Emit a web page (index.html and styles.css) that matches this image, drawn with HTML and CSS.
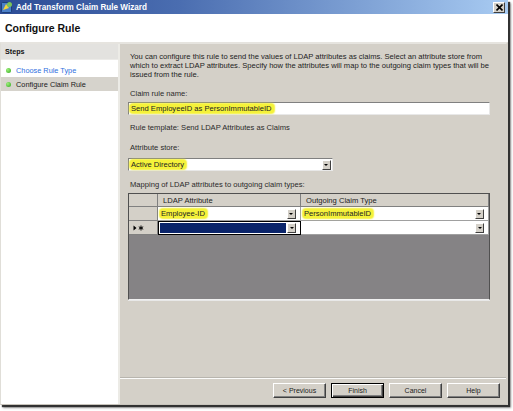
FILE: index.html
```html
<!DOCTYPE html>
<html>
<head>
<meta charset="utf-8">
<link rel="stylesheet" href="styles.css">
</head>
<body>
<div class="window">
  <div class="titlebar">
    <svg class="app-icon" width="12" height="12" viewBox="0 0 12 12">
      <rect x="0.5" y="1.5" width="10" height="10" rx="1" fill="#4a7fc8" stroke="#1d3f7a" stroke-width="1"/>
      <path d="M2 9 L5 3 L8 7 Z" fill="#f4d43c"/>
      <circle cx="8.5" cy="3.5" r="2.5" fill="#7cc25a"/>
    </svg>
    <span class="title">Add Transform Claim Rule Wizard</span>
    <span class="close">
      <svg width="7" height="7" viewBox="0 0 7 7"><path d="M0.5 0.5 L6.5 6.5 M6.5 0.5 L0.5 6.5" stroke="#000" stroke-width="1.6"/></svg>
    </span>
  </div>
  <div class="header"><h1 class="page-title">Configure Rule</h1></div>
  <div class="body">
    <div class="sidebar">
      <div class="steps-head">Steps</div>
      <div class="step done"><span class="dot"></span>Choose Rule Type</div>
      <div class="step current"><span class="dot"></span>Configure Claim Rule</div>
    </div>
    <div class="main">
      <div class="content">
        <p class="desc">You can configure this rule to send the values of LDAP attributes as claims. Select an attribute store from which to extract LDAP attributes. Specify how the attributes will map to the outgoing claim types that will be issued from the rule.</p>
        <div class="label l-name">Claim rule name:</div>
        <div class="textbox"><span class="hl">Send EmployeeID as PersonImmutableID</span></div>
        <div class="label l-template">Rule template: Send LDAP Attributes as Claims</div>
        <div class="label l-store">Attribute store:</div>
        <div class="combo"><span class="hl">Active Directory</span><span class="dd"><span class="arrow"></span></span></div>
        <div class="label l-map">Mapping of LDAP attributes to outgoing claim types:</div>
        <div class="grid">
          <div class="grow ghead">
            <div class="rh"></div>
            <div class="c1 hcell">LDAP Attribute</div>
            <div class="c2 hcell">Outgoing Claim Type</div>
          </div>
          <div class="grow">
            <div class="rh"></div>
            <div class="c1 cell"><span class="hl">Employee-ID</span><span class="dd"><span class="arrow"></span></span></div>
            <div class="c2 cell"><span class="hl">PersonImmutableID</span><span class="dd"><span class="arrow"></span></span></div>
          </div>
          <div class="grow">
            <div class="rh">
              <svg width="11" height="6" viewBox="0 0 11 6"><path d="M0.5 0.5 L3.5 3 L0.5 5.5 Z" fill="#000"/><path d="M8 0.5 V5.5 M5.8 1.8 L10.2 4.2 M10.2 1.8 L5.8 4.2" stroke="#000" stroke-width="1"/></svg>
            </div>
            <div class="c1 cell sel"><span class="selfill"></span><span class="dd"><span class="arrow"></span></span></div>
            <div class="c2 cell"><span class="dd"><span class="arrow"></span></span></div>
          </div>
          <div class="gempty"></div>
        </div>
      </div>
      <div class="footer">
        <button class="btn">&lt; Previous</button>
        <button class="btn default">Finish</button>
        <button class="btn">Cancel</button>
        <button class="btn">Help</button>
      </div>
    </div>
  </div>
</div>
</body>
</html>
```

FILE: styles.css
```css
html, body {
  margin: 0;
  padding: 0;
  background: #ffffff;
}
body {
  width: 513px;
  height: 411px;
  font-family: "Liberation Sans", Arial, sans-serif;
  font-size: 7.6px;
  color: #1a1a1a;
  overflow: hidden;
}
.window {
  width: 508px;
  height: 405px;
  display: flex;
  flex-direction: column;
  background: #d4d0c8;
  box-shadow: 2px 2px 1px rgba(30, 30, 30, 0.85), 3px 3px 2px rgba(60, 60, 60, 0.5);
}
.titlebar {
  height: 14px;
  display: flex;
  align-items: center;
  background: linear-gradient(to right, #2c4c96 0%, #4a6db0 35%, #a8cbf2 100%);
  padding: 0 2px 0 1px;
}
.app-icon {
  flex: none;
  margin-right: 3px;
}
.title {
  color: #fff;
  font-weight: bold;
  font-size: 8.15px;
  flex: 1;
}
.close {
  width: 10px;
  height: 9px;
  display: flex;
  align-items: center;
  justify-content: center;
  background: #d4d0c8;
  border-top: 1px solid #fff;
  border-left: 1px solid #fff;
  border-right: 1px solid #404040;
  border-bottom: 1px solid #404040;
  margin-right: 1px;
}
.header {
  height: 28px;
  background: #fff;
  display: flex;
  align-items: center;
  padding-left: 5px;
}
.page-title {
  margin: 0;
  font-size: 10.5px;
  font-weight: bold;
  color: #111;
}
.body {
  flex: 1;
  display: flex;
  border-top: 2px solid #e6e4df;
  border-left: 1px solid #e0ded8;
  border-right: 2px solid #d4d0c8;
  border-bottom: 1px solid #c8c4bc;
}
.sidebar {
  width: 117px;
  background: #fff;
  border-right: 2px solid #ecebe6;
}
.steps-head {
  height: 15px;
  line-height: 15px;
  background: #e3e2df;
  font-weight: bold;
  padding-left: 4px;
  font-size: 7.2px;
  color: #111;
  border-bottom: 1px solid #ecebe8;
}
.step {
  height: 14px;
  display: flex;
  align-items: center;
  padding-left: 5px;
  font-size: 7.35px;
}
.step.done {
  margin-top: 3px;
  color: #2f6fe0;
}
.step.current {
  background: #d6d3cc;
  color: #1a1a1a;
}
.dot {
  width: 5px;
  height: 5px;
  border-radius: 50%;
  background: radial-gradient(circle at 35% 35%, #9ef07a, #2fa81e);
  margin-right: 5px;
}
.main {
  flex: 1;
  display: flex;
  flex-direction: column;
}
.content {
  flex: 1;
  padding: 8px 16px 0 8px;
  border-bottom: 1px solid #b8b5ae;
}
.desc {
  margin: 0 0 0 2px;
  line-height: 9px;
  color: #222;
}
.label {
  line-height: 9px;
  margin-left: 2px;
  color: #2a2a2a;
}
.l-name { margin-top: 10px; }
.l-template { margin-top: 8px; }
.l-store { margin-top: 11px; }
.l-map { margin-top: 9px; }
.hl {
  background: #f5f23a;
  border-radius: 3px;
  padding: 0 2px 0 1px;
  box-shadow: 0 0 1.5px 1px #f5f23a;
  color: #222;
}
.textbox {
  margin-top: 4px;
  height: 11px;
  width: 359px;
  background: #fff;
  border: 1px solid;
  border-color: #808080 #e8e8e8 #e8e8e8 #808080;
  display: flex;
  align-items: center;
  padding-left: 1px;
}
.combo {
  margin-top: 6px;
  height: 11px;
  width: 202px;
  background: #fff;
  border: 1px solid;
  border-color: #808080 #e8e8e8 #e8e8e8 #808080;
  display: flex;
  align-items: center;
  padding-left: 1px;
}
.combo .hl { margin-right: auto; }
.dd {
  flex: none;
  width: 7px;
  height: 8px;
  margin-left: auto;
  margin-right: 1px;
  background: #d4d0c8;
  border-top: 1px solid #fff;
  border-left: 1px solid #fff;
  border-right: 1px solid #404040;
  border-bottom: 1px solid #404040;
  display: flex;
  align-items: center;
  justify-content: center;
}
.arrow {
  width: 0;
  height: 0;
  border-left: 2px solid transparent;
  border-right: 2px solid transparent;
  border-top: 2px solid #000;
}
.grid {
  margin-top: 4px;
  width: 360px;
  height: 105px;
  border: 1px solid;
  border-color: #505050 #505050 #f0f0f0 #505050;
  box-shadow: 0 1px 0 #e8e8e8;
  background: #858385;
  display: flex;
  flex-direction: column;
}
.grow {
  display: flex;
  height: 14px;
  flex: none;
}
.ghead { height: 13px; }
.rh {
  width: 29px;
  flex: none;
  background: #d4d0c8;
  border-right: 1px solid #808080;
  border-bottom: 1px solid #808080;
  display: flex;
  align-items: center;
  padding-left: 4px;
  box-sizing: border-box;
}
.hcell {
  background: #d4d0c8;
  border-right: 1px solid #808080;
  border-bottom: 1px solid #808080;
  box-sizing: border-box;
  display: flex;
  align-items: flex-end;
  padding: 0 0 1px 5px;
  color: #222;
}
.c1 {
  width: 143px;
  flex: none;
  box-sizing: border-box;
}
.c2 {
  flex: 1;
  box-sizing: border-box;
}
.cell {
  background: #fff;
  border-right: 1px solid #a0a0a0;
  border-bottom: 1px solid #a0a0a0;
  display: flex;
  align-items: center;
  padding-left: 2px;
  padding-right: 3px;
}
.cell .hl { margin-right: auto; }
.cell.sel {
  border: 1px solid #000;
  padding-left: 1px;
}
.selfill {
  flex: 1;
  align-self: stretch;
  background: #0a246a;
  margin: 1px 1px 1px 0;
}
.gempty { flex: 1; }
.footer {
  height: 26px;
  border-top: 1px solid #fbfbfa;
  display: flex;
  justify-content: flex-end;
  align-items: flex-start;
  padding: 4px 6px 0 0;
  gap: 5px;
  box-sizing: border-box;
}
.btn {
  width: 53px;
  height: 15px;
  padding: 0;
  margin: 0;
  font-family: "Liberation Sans", Arial, sans-serif;
  font-size: 7px;
  color: #222;
  background: #d4d0c8;
  border: 1px solid;
  border-color: #fff #404040 #404040 #fff;
  box-shadow: inset -1px -1px 0 #808080;
}
.btn.default {
  border: 1px solid #000;
  box-shadow: inset 1px 1px 0 #fff, inset -1px -1px 0 #404040, inset -2px -2px 0 #808080;
}
```
